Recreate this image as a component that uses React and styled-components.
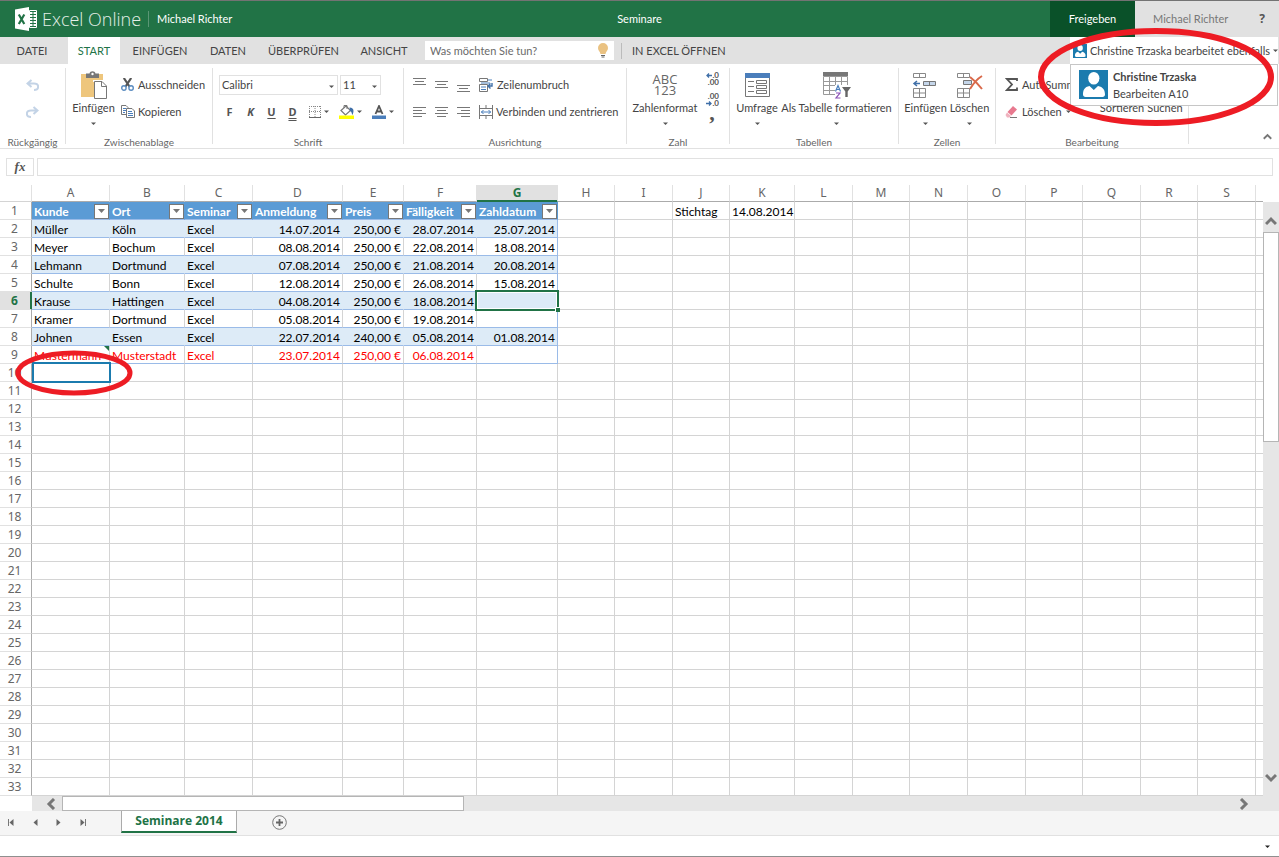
import React from "react";
import styled, { createGlobalStyle, css } from "styled-components";

const Global = createGlobalStyle`
  *, *::before, *::after { box-sizing: border-box; }
  body { margin: 0; background: #fff; color: #444; font: 11px/16px Lato, "Open Sans", sans-serif; }
  button, input, select { font: inherit; color: inherit; margin: 0; padding: 0; border: 0; background: none; border-radius: 0; }
  button { cursor: pointer; white-space: nowrap; }
  svg { display: block; flex: none; }
`;

const Page = styled.div`
  display: flex;
  flex-direction: column;
  min-height: 100vh;
  overflow-x: hidden;
  border-top: 1px solid #737373;
  border-bottom: 1px solid #8f8f8f;
`;

/* Title bar */
const TitleBar = styled.header`
  display: grid;
  grid-template-columns: 1fr auto 1fr;
  align-items: stretch;
  height: 36px;
  background: #217346;
  color: #fff;
`;
const Brand = styled.div`
  display: flex;
  align-items: center;
  padding-left: 15px;
`;
const BrandName = styled.span`
  margin-left: 5px;
  width: 106px;
  font: 300 18px/24px "Open Sans", sans-serif;
  color: #e3efe8;
  white-space: nowrap;
`;
const BrandOwner = styled.span`
  padding-left: 8px;
  border-left: 1px solid #5a9675;
`;
const DocName = styled.h1`
  margin: 0;
  align-self: center;
  font: inherit;
`;
const Account = styled.div`
  display: flex;
  justify-content: flex-end;
`;
const ShareButton = styled.button`
  width: 85px;
  background: #0a5129;
`;
const AccountPanel = styled.div`
  display: flex;
  align-items: center;
  justify-content: space-between;
  width: 144px;
  padding: 0 14px 0 18px;
  background: #e1e1e1;
  color: #777;
`;
const HelpButton = styled.button`
  font: 700 12px/16px "Noto Sans", sans-serif;
  color: #555;
`;

/* Tabs */
const TabBar = styled.nav`
  display: flex;
  height: 27px;
  background: #e1e1e1;
  gap: 4px;
`;
const Tab = styled.button`
  width: ${(p) => p.$w}px;
  ${(p) => p.$active && css`background: #fff; color: #217346;`}
`;
const TellMe = styled.label`
  display: flex;
  align-items: center;
  width: 189px;
  height: 19px;
  margin: 4px 3px 4px 4px;
  padding: 0 5px;
  background: #fff;
`;
const TellMeInput = styled.input`
  flex: 1;
  min-width: 0;
  outline: 0;
  &::placeholder { color: #6a6a6a; opacity: 1; }
`;
const OpenInExcel = styled.a`
  align-self: center;
  padding-left: 10px;
  border-left: 1px solid #bbb;
  color: inherit;
  text-decoration: none;
  white-space: nowrap;
`;
const Presence = styled.div`
  position: relative;
  width: 208px;
  margin: 0 1px 0 auto;
  background: #fff;
`;
const PresenceButton = styled.button`
  display: flex;
  align-items: center;
  gap: 3px;
  width: 100%;
  height: 27px;
  padding: 0 3px;
`;
const PresenceText = styled.span`
  flex: 1;
  text-align: left;
`;
const PresenceMenu = styled.div`
  position: absolute;
  z-index: 2;
  top: 27px;
  left: 0;
  display: flex;
  gap: 5px;
  width: 100%;
  height: 42px;
  padding: 5px 8px;
  background: #fff;
  border: 1px solid #c6c6c6;
`;
const PresencePerson = styled.div`
  line-height: 17px;
  margin-top: -2px;
`;
const PersonName = styled.strong`
  display: block;
`;
const Highlight = styled.svg`
  position: absolute;
  z-index: 3;
  pointer-events: none;
  ${(p) => p.$place === "presence"
    ? css`top: -9px; right: -1px;`
    : css`top: -14px; left: -17px;`}
`;

/* Ribbon */
const Ribbon = styled.section`
  display: flex;
  height: 85px;
  padding-top: 4px;
  border-bottom: 1px solid #e1e1e1;
`;
const Group = styled.div`
  display: flex;
  flex-direction: column;
  width: ${(p) => p.$w}px;
  height: 76px;
  border-right: 1px solid #e1e1e1;
`;
const GroupBody = styled.div`
  display: flex;
  flex: none;
  height: 67px;
  padding-left: ${(p) => p.$pad || 0}px;
  gap: ${(p) => p.$gap || 0}px;
`;
const GroupLabel = styled.div`
  text-align: center;
  font-size: 10px;
  line-height: 14px;
  color: #666;
`;
const Rows = styled.div`
  display: flex;
  flex-direction: column;
  padding-top: 3px;
  width: ${(p) => p.$w || "auto"};
  ${(p) => p.$center && css`align-items: center;`}
`;
const Row = styled.div`
  display: flex;
  align-items: center;
  height: 27px;
  gap: ${(p) => p.$gap || 0}px;
  padding-left: ${(p) => p.$pad || 0}px;
`;
const Tool = styled.button`
  display: flex;
  align-items: center;
  gap: ${(p) => p.$gap ?? 4}px;
`;
const Letter = styled.button`
  width: 21px;
  text-align: center;
  font-family: "Noto Sans", sans-serif;
  font-weight: 700;
  font-style: ${(p) => (p.$italic ? "italic" : "normal")};
  text-decoration: ${(p) => p.$line || "none"};
  text-underline-offset: 2px;
  color: #555;
`;
const BigTool = styled.button`
  display: flex;
  flex-direction: column;
  align-items: center;
  align-self: flex-start;
  width: ${(p) => p.$w}px;
`;
const BigIcon = styled.span`
  display: flex;
  align-items: center;
  justify-content: center;
  height: 32px;
  padding-top: 2px;
`;
const BigCaret = styled.span`
  display: flex;
  align-items: center;
  height: 14px;
`;
const SelectBox = styled.label`
  position: relative;
  width: ${(p) => p.$w}px;
  height: 20px;
  border: 1px solid #e1e1e1;
`;
const Select = styled.select`
  display: block;
  width: 100%;
  height: 18px;
  padding-left: 2px;
  appearance: none;
  outline: 0;
`;
const SelectCaret = styled.span`
  position: absolute;
  right: 3px;
  top: 9px;
  pointer-events: none;
`;
const MiniColumn = styled.div`
  display: flex;
  flex-direction: column;
  gap: 7px;
  padding-top: 4px;
`;
const CollapseButton = styled.button`
  margin: auto 7px 7px auto;
`;

/* Formula bar */
const FormulaBar = styled.div`
  display: flex;
  gap: 3px;
  height: 36px;
  padding: 9px 6px;
`;
const FxButton = styled.button`
  display: flex;
  align-items: center;
  justify-content: center;
  width: 28px;
  border: 1px solid #e1e1e1;
  font: italic 700 13px/14px "Liberation Serif", serif;
  color: #555;
`;
const FormulaInput = styled.input`
  flex: 1;
  border: 1px solid #e1e1e1;
  outline: 0;
`;

/* Sheet */
const SheetArea = styled.main`
  display: flex;
`;
const SheetWrap = styled.div`
  flex: 1;
  min-width: 0;
`;
const Sheet = styled.table`
  width: 100%;
  table-layout: fixed;
  border-collapse: separate;
  border-spacing: 0;
`;
const Col = styled.col`
  width: ${(p) => (p.$w ? p.$w + "px" : "auto")};
`;
const headBase = css`
  padding: 0;
  font: 12px/16px "Noto Sans", "Open Sans", sans-serif;
  color: #666;
  text-align: center;
  border-right: 1px solid #e1e1e1;
  border-bottom: 1px solid #ababab;
`;
const ColHead = styled.th`
  ${headBase}
  height: 17px;
  ${(p) => p.$active && css`
    background: #e1e1e1;
    color: #217346;
    font-weight: 700;
    box-shadow: inset 0 -1px #217346;
    border-bottom-color: #217346;
  `}
  &:last-child { border-right: 0; }
`;
const CornerHead = styled.td`
  ${headBase}
  height: 17px;
  border-bottom-color: #d4d4d4;
`;
const RowHead = styled.th`
  ${headBase}
  height: 18px;
  padding-right: 2px;
  border-right-color: #ababab;
  border-bottom-color: #e1e1e1;
  ${(p) => p.$active && css`
    background: #e1e1e1;
    color: #217346;
    font-weight: 700;
    border-right-color: #217346;
    box-shadow: inset -1px 0 #217346;
  `}
`;
const Cell = styled.td`
  position: relative;
  height: 18px;
  padding: 2px 2px 0 2px;
  font: 12px/15px Lato, "Open Sans", sans-serif;
  color: ${(p) => (p.$red ? "#f00" : "#000")};
  text-align: ${(p) => p.$align || "left"};
  white-space: nowrap;
  border-right: 1px solid ${(p) => (p.$edge ? "#9abbe8" : p.$band ? "#ddebf7" : "#d4d4d4")};
  border-bottom: 1px solid ${(p) => (p.$table ? "#9abbe8" : "#d4d4d4")};
  background: ${(p) => (p.$band ? "#ddebf7" : "#fff")};
  &:last-child { border-right: 0; }
`;
const HeadCell = styled(Cell)`
  padding: 0 0 0 2px;
  background: #5b9bd5;
  border-right-color: #5b9bd5;
  font-weight: 700;
  color: #fff;
`;
const HeadCellInner = styled.div`
  display: flex;
  align-items: flex-end;
  justify-content: space-between;
  height: 16px;
`;
const FilterButton = styled.button`
  display: flex;
  flex: none;
  align-items: center;
  justify-content: center;
  width: 15px;
  height: 15px;
  background: #fff;
  border: 1px solid #777;
`;
const ActiveCell = styled.div`
  position: absolute;
  z-index: 1;
  inset: -2px;
  border: 2px solid ${(p) => p.$color};
  ${(p) => p.$handle && css`
    box-shadow: inset 0 0 0 1px #fff;
    &::after {
      content: "";
      position: absolute;
      right: -3px;
      bottom: -3px;
      width: 5px;
      height: 5px;
      background: ${p.$color};
      border: solid #fff;
      border-width: 1px 0 0 1px;
    }
  `}
  ${(p) => p.$other && css`left: 0;`}
`;
const ErrorMark = styled.span`
  position: absolute;
  top: 0;
  right: 0;
  border-top: 5px solid #217346;
  border-left: 5px solid transparent;
`;

/* Scroll bars */
const VScroll = styled.div`
  display: flex;
  flex-direction: column;
  align-items: center;
  width: 16px;
  margin-top: 17px;
  padding: 13px 0 27px;
  background: #e6e6e6;
`;
const VThumb = styled.div`
  width: 16px;
  height: 210px;
  margin: 5px 0 auto;
  background: #fff;
  border: 1px solid #b5b5b5;
`;
const HScroll = styled.div`
  display: flex;
  align-items: center;
  height: 15px;
  margin-left: 32px;
  padding: 0 13px;
  background: #e6e6e6;
`;
const HThumb = styled.div`
  width: 402px;
  height: 15px;
  margin: 0 auto 0 5px;
  background: #fff;
  border: 1px solid #b5b5b5;
`;

/* Sheet tabs */
const SheetTabs = styled.footer`
  display: flex;
  align-items: flex-start;
  height: 25px;
  background: #f5f5f5;
  border-bottom: 1px solid #e1e1e1;
`;
const SheetNav = styled.div`
  display: flex;
  align-items: center;
  gap: 16px;
  width: 121px;
  height: 23px;
  padding-left: 7px;
`;
const SheetTab = styled.button`
  width: 116px;
  height: 22px;
  background: #fff;
  border: solid #ababab;
  border-width: 0 1px 2px;
  border-bottom-color: #217346;
  color: #217346;
  font: 700 12px/20px "Open Sans", sans-serif;
`;
const AddSheet = styled.button`
  margin: 4px 0 0 35px;
`;
const StatusBar = styled.div`
  display: flex;
  align-items: center;
  justify-content: flex-end;
  flex: 1;
  min-height: 20px;
  padding-right: 9px;
`;

/* Drawings */
const Caret = ({ color = "#555" }) => (
  <svg width="5" height="3" viewBox="0 0 5 3"><path d="M0 0.5h5L2.5 3z" fill={color} /></svg>
);
const Svg = ({ w, h, children, ...rest }) => (
  <svg width={w} height={h} viewBox={`0 0 ${w} ${h}`} fill="none" aria-hidden="true" {...rest}>{children}</svg>
);
const ExcelLogo = () => (
  <Svg w={22} h={24}>
    <path d="M14.500 3.500h7v17h-7z" stroke="#fff" />
    <path d="M15 6h2.500M15 9h2.500M15 12h2.500M15 15h2.500M15 18h2.500M18.500 6H21M18.500 9H21M18.500 12H21M18.500 15H21M18.500 18H21" stroke="#fff" strokeWidth="2" />
    <path d="M0 2.500 14 0v24L0 21.500z" fill="#fff" />
    <path d="m3.800 7.500 5.500 9.500M9.300 7.500 3.800 17" stroke="#217346" strokeWidth="2.200" />
  </Svg>
);
const Bulb = () => (
  <Svg w={12} h={15}>
    <path d="M6 0a5 5 0 0 1 5 5c0 2.500-2 3.500-2.500 6h-5C3 8.500 1 7.500 1 5a5 5 0 0 1 5-5z" fill="#eac282" />
    <path d="M4 12.500h4M4.500 14h3" stroke="#666" />
  </Svg>
);
const Person = ({ size }) => (
  <svg width={size} height={size} viewBox="0 0 29 29" aria-hidden="true">
    <path d="M0 0h29v29H0z" fill="#1b7bae" />
    <ellipse cx="14.800" cy="8.300" rx="5.600" ry="6.300" fill="#fff" />
    <path d="M4 24.500c0-4.500 1.500-7.500 6.500-8.500l4.300 4 4.200-4c5 1 7 4 7 8.500 0 1.500-1 2.500-2.500 2.500h-17C5 27 4 26 4 24.500z" fill="#fff" />
  </svg>
);
const Undo = ({ flip }) => (
  <Svg w={13} h={12} transform={flip ? "scale(-1 1)" : undefined}>
    <path d="M1.500 4.500H8c5.500 0 5.500 6.500 0 6.500M5.500 1l-4 3.500 4 3.500" stroke="#c3d3e6" strokeWidth="2" />
  </Svg>
);
const Paste = () => (
  <Svg w={26} h={28}>
    <path d="M0 3h22v23H0z" fill="#eec67d" />
    <path d="M5 2.500h3.500C9-.5 14-.5 14.500 2.500H18v4.500H5z" fill="#777" />
    <circle cx="11.500" cy="3" r="1.200" fill="#fff" />
    <path d="M12 9h10.500v2H12z" fill="#fff" />
    <path d="M13.500 10.500h7.500l4.500 4.500v12.500h-12z" fill="#fff" stroke="#777" />
    <path d="M20.500 10.500V15.500h5" stroke="#777" />
  </Svg>
);
const Cut = () => (
  <Svg w={13} h={13}>
    <path d="M2.800 0 8.800 9M10.200 0 4.200 9" stroke="#555" strokeWidth="2.200" />
    <circle cx="2.900" cy="10" r="2.200" fill="#fff" stroke="#5b8cc0" strokeWidth="1.400" />
    <circle cx="10.100" cy="10" r="2.200" fill="#fff" stroke="#5b8cc0" strokeWidth="1.400" />
  </Svg>
);
const Copy = () => (
  <Svg w={14} h={13}>
    <path d="M.5.5H5l2 2v7H.5z" fill="#fff" stroke="#777" />
    <path d="M2 3.500h3M2 5.500h3M2 7.500h2" stroke="#4a7ebb" />
    <path d="M5.500 3.500H11l2.500 2.500v6.500h-8z" fill="#fff" stroke="#777" />
    <path d="M7 6.500h4M7 8.500h5M7 10.500h5" stroke="#4a7ebb" />
  </Svg>
);
const Borders = () => (
  <Svg w={12} h={12}>
    <path d="M.5 0v12M11.500 0v12M0 .5h12M0 5.500h12M6 0v12" stroke="#888" strokeDasharray="1 1" />
    <path d="M0 11.500h12" stroke="#666" />
  </Svg>
);
const Fill = () => (
  <Svg w={15} h={14}>
    <path d="m2 5.500 5-4.500 4.500 4.500-5 4.500z" fill="#fff" stroke="#777" strokeWidth="1.200" />
    <path d="M5 3V.5h3v3.500" stroke="#777" />
    <path d="M10.500 2.500c4 0 5 3 3 7.500-1-1.500-.5-3-2.500-4z" fill="#3f6fa8" />
    <path d="M0 10.500h15v3.500H0z" fill="#ff0" />
  </Svg>
);
const FontColor = () => (
  <Svg w={14} h={14}>
    <path d="m3.500 9 3.500-8 3.500 8M4.500 6.500h5" stroke="#555" strokeWidth="1.800" />
    <path d="M0 10.500h14v3.500H0z" fill="#4a7ebb" />
  </Svg>
);
const Lines = ({ lines }) => (
  <Svg w={13} h={14}>
    {lines.map(([x1, x2, y]) => <path key={y} d={`M${x1} ${y + 0.5}H${x2}`} stroke="#777" />)}
  </Svg>
);
const Wrap = () => (
  <Svg w={14} h={14}>
    <path d="M.5.500h8v3h-8zM.5 6.500h8v7h-8z" stroke="#777" />
    <path d="M9 2h4M2 5h9M2 9h5M2 11.500h5" stroke="#4a7ebb" />
    <path d="M13 5v3H9.500M11.500 5.500 9 8l2.500 2.500" stroke="#3f6fa8" strokeWidth="1.400" />
  </Svg>
);
const Merge = () => (
  <Svg w={14} h={14}>
    <path d="M.5 0v14M13.500 0v14M0 3.500h14M0 10.500h14M7 0v3.500M7 10.500V14" stroke="#777" />
    <path d="M2 7h10M4.500 5 2.500 7l2 2M9.500 5l2 2-2 2" stroke="#4a7ebb" />
  </Svg>
);
const NumberText = styled.span`
  font: 500 13px/11px "Open Sans", sans-serif;
  color: #666;
  text-align: center;
`;
const DecimalText = styled.span`
  display: flex;
  align-items: center;
  justify-content: flex-end;
  width: 14px;
  height: 7px;
  font-size: 8px;
  line-height: 7px;
  font-weight: 700;
  color: #555;
`;
const Comma = styled.button`
  height: 12px;
  margin-top: -7px;
  font: 700 22px/12px "Liberation Serif", serif;
  color: #555;
`;
const DecArrow = ({ right }) => (
  <Svg w={6} h={5} transform={right ? "scale(-1 1)" : undefined}>
    <path d="M1 2.500h5M3 .5l-2 2 2 2" stroke="#3f6fa8" strokeWidth="1.300" />
  </Svg>
);
const Survey = () => (
  <Svg w={25} h={24}>
    <path d="M.5.500h24v23H.5z" fill="#fff" stroke="#777" />
    <path d="M0 0h25v5H0z" fill="#4a7ebb" />
    <path d="M3 8.500h6M3 13.500h6M3 18.500h6M11.500 7.500h10v3h-10zM11.500 12.500h10v3h-10zM11.500 17.500h10v3h-10z" stroke="#777" />
  </Svg>
);
const FormatTable = () => (
  <Svg w={28} h={27}>
    <path d="M.5 4.500h24v18H.5zM0 9.500h25M0 13.500h25M0 18.500h25M6.500 4v19M12.500 4v19M18.500 4v19" stroke="#999" />
    <path d="M0 0h25v4H0z" fill="#777" />
    <path d="M12 13h16v14H12z" fill="#fff" />
    <path d="m12.500 19.500 2.500-6 2.500 6M13.500 17.500h3" stroke="#4a7ebb" strokeWidth="1.200" />
    <path d="M13 21h4l-4 5h4.500" stroke="#8a4fb5" strokeWidth="1.200" />
    <path d="M19 15h9l-3.300 4.500V25h-2.400v-5.500z" fill="#666" />
  </Svg>
);
const CellsIcon = ({ remove }) => (
  <Svg w={27} h={26}>
    <path d="M1.500 1.500h12v4h-12zM7.500 1.500v4M1.500 16.500h12v9h-12zM7.500 16.500v9M1.500 21h12" stroke="#888" />
    {remove ? (
      <>
        <path d="M7.500 8.500h8v4h-8z" fill="#c5d6ea" stroke="#777" />
        <path d="M14 5c4 3 8 7 12 12M26 4c-5 3-9 8-12 13" stroke="#d9694a" strokeWidth="2" />
      </>
    ) : (
      <>
        <path d="M11.500 9.500h12v4h-12zM17.500 9.500v4" fill="#c5d6ea" stroke="#777" />
        <path d="M2 11.500h6M5 9l-3 2.500L5 14" stroke="#3f6fa8" strokeWidth="1.500" />
      </>
    )}
  </Svg>
);
const Sigma = () => (
  <Svg w={13} h={13}>
    <path d="M12 3V1H2l5 5.500-5 5.500h10V9.500" stroke="#555" strokeWidth="1.800" />
  </Svg>
);
const Eraser = () => (
  <Svg w={13} h={12}>
    <path d="m8 0 4 3.500-5.500 6L2.500 6z" fill="#e8798f" />
    <path d="m2 6.500 4 3.500-1.500 1.500H2L.5 9z" fill="#f0b3bf" />
    <path d="M5 11.500h7" stroke="#777" />
  </Svg>
);
const Chevron = ({ dir, size = 12, w = 3 }) => {
  const r = { up: 0, right: 90, down: 180, left: 270 }[dir];
  return (
    <svg width={size} height={size} viewBox="0 0 12 12" fill="none" aria-hidden="true">
      <path d="m1 9 5-5 5 5" stroke="#777" strokeWidth={w} transform={`rotate(${r} 6 6)`} />
    </svg>
  );
};
const NavArrow = ({ dir, bar }) => (
  <Svg w={8} h={7}>
    <path d={dir === "left" ? "M6.500 0v7L2.500 3.500z" : "M1.500 0v7l4-3.500z"} fill="#666" />
    {bar && <path d={dir === "left" ? "M1.500 0v7" : "M6.500 0v7"} stroke="#777" />}
  </Svg>
);
const Plus = () => (
  <Svg w={15} h={15}>
    <circle cx="7.500" cy="7.500" r="6.800" stroke="#777" />
    <path d="M7.500 4v7M4 7.500h7" stroke="#666" strokeWidth="1.800" />
  </Svg>
);

/* Data */
const columns = [
  ["A", 78], ["B", 75], ["C", 68], ["D", 90], ["E", 61], ["F", 73], ["G", 81], ["H", 57], ["I", 58], ["J", 57],
  ["K", 65], ["L", 58], ["M", 57], ["N", 58], ["O", 58], ["P", 57], ["Q", 58], ["R", 57], ["S", 58], ["", 0],
];
const tableHead = ["Kunde", "Ort", "Seminar", "Anmeldung", "Preis", "Fälligkeit", "Zahldatum"];
const records = [
  ["Müller", "Köln", "Excel", "14.07.2014", "250,00 €", "28.07.2014", "25.07.2014"],
  ["Meyer", "Bochum", "Excel", "08.08.2014", "250,00 €", "22.08.2014", "18.08.2014"],
  ["Lehmann", "Dortmund", "Excel", "07.08.2014", "250,00 €", "21.08.2014", "20.08.2014"],
  ["Schulte", "Bonn", "Excel", "12.08.2014", "250,00 €", "26.08.2014", "15.08.2014"],
  ["Krause", "Hattingen", "Excel", "04.08.2014", "250,00 €", "18.08.2014", ""],
  ["Kramer", "Dortmund", "Excel", "05.08.2014", "250,00 €", "19.08.2014", ""],
  ["Johnen", "Essen", "Excel", "22.07.2014", "240,00 €", "05.08.2014", "01.08.2014"],
  ["Mustermann", "Musterstadt", "Excel", "23.07.2014", "250,00 €", "06.08.2014", ""],
];

function SheetCell({ row, col }) {
  if (row === 1) {
    if (col < 7) {
      return (
        <HeadCell $table>
          <HeadCellInner>
            {tableHead[col]}
            <FilterButton aria-label={`${tableHead[col]} filtern`}>
              <svg width="7" height="4" viewBox="0 0 7 4"><path d="M0 0h7L3.500 4z" fill="#777" /></svg>
            </FilterButton>
          </HeadCellInner>
        </HeadCell>
      );
    }
    if (col === 9) return <Cell>Stichtag</Cell>;
    if (col === 10) return <Cell $align="right">14.08.2014</Cell>;
    return <Cell />;
  }
  if (row <= 9 && col < 7) {
    return (
      <Cell $table $band={row % 2 === 0} $edge={col === 6} $red={row === 9} $align={col > 2 ? "right" : "left"}>
        {records[row - 2][col]}
        {row === 6 && col === 6 && <ActiveCell $color="#217346" $handle />}
        {row === 9 && col === 0 && <ErrorMark />}
      </Cell>
    );
  }
  if (row === 10 && col === 0) {
    return (
      <Cell>
        <ActiveCell $color="#1b7bae" $other />
        <Highlight width="118" height="46" viewBox="0 0 118 46" $place="cell" aria-hidden="true">
          <ellipse cx="59" cy="23" rx="56" ry="20" fill="none" stroke="#ed1c24" strokeWidth="5" />
        </Highlight>
      </Cell>
    );
  }
  return <Cell />;
}

const Big = ({ icon, label, w, caret = true }) => (
  <BigTool $w={w}>
    <BigIcon>{icon}</BigIcon>
    {label}
    {caret && <BigCaret><Caret /></BigCaret>}
  </BigTool>
);

export default function App() {
  return (
    <>
      <Global />
      <Page>
        <TitleBar>
          <Brand>
            <ExcelLogo />
            <BrandName>Excel Online</BrandName>
            <BrandOwner>Michael Richter</BrandOwner>
          </Brand>
          <DocName>Seminare</DocName>
          <Account>
            <ShareButton>Freigeben</ShareButton>
            <AccountPanel>
              Michael Richter
              <HelpButton>?</HelpButton>
            </AccountPanel>
          </Account>
        </TitleBar>

        <TabBar>
          <Tab $w={64}>DATEI</Tab>
          <Tab $w={52} $active>START</Tab>
          <Tab $w={72}>EINFÜGEN</Tab>
          <Tab $w={56}>DATEN</Tab>
          <Tab $w={87}>ÜBERPRÜFEN</Tab>
          <Tab $w={66}>ANSICHT</Tab>
          <TellMe>
            <TellMeInput placeholder="Was möchten Sie tun?" aria-label="Was möchten Sie tun?" />
            <Bulb />
          </TellMe>
          <OpenInExcel href="#">IN EXCEL ÖFFNEN</OpenInExcel>
          <Presence>
            <PresenceButton>
              <Person size={14} />
              <PresenceText>Christine Trzaska bearbeitet ebenfalls</PresenceText>
              <Caret />
            </PresenceButton>
            <PresenceMenu>
              <Person size={29} />
              <PresencePerson>
                <PersonName>Christine Trzaska</PersonName>
                Bearbeiten A10
              </PresencePerson>
            </PresenceMenu>
            <Highlight width="246" height="98" viewBox="0 0 246 98" $place="presence" aria-hidden="true">
              <ellipse cx="123" cy="49" rx="115" ry="46" fill="none" stroke="#ed1c24" strokeWidth="6" />
            </Highlight>
          </Presence>
        </TabBar>

        <Ribbon>
          <Group $w={66}>
            <GroupBody>
              <Rows $center $w="100%">
                <Row><Tool aria-label="Rückgängig"><Undo /></Tool></Row>
                <Row><Tool aria-label="Wiederholen"><Undo flip /></Tool></Row>
              </Rows>
            </GroupBody>
            <GroupLabel>Rückgängig</GroupLabel>
          </Group>

          <Group $w={147}>
            <GroupBody $pad={5} $gap={5}>
              <Big w={45} icon={<Paste />} label="Einfügen" />
              <Rows>
                <Row><Tool><Cut />Ausschneiden</Tool></Row>
                <Row><Tool $gap={3}><Copy />Kopieren</Tool></Row>
              </Rows>
            </GroupBody>
            <GroupLabel>Zwischenablage</GroupLabel>
          </Group>

          <Group $w={191}>
            <GroupBody $pad={6}>
              <Rows>
                <Row $gap={2}>
                  <SelectBox $w={119}>
                    <Select aria-label="Schriftart"><option>Calibri</option></Select>
                    <SelectCaret><Caret /></SelectCaret>
                  </SelectBox>
                  <SelectBox $w={41}>
                    <Select aria-label="Schriftgrad"><option>11</option></Select>
                    <SelectCaret><Caret /></SelectCaret>
                  </SelectBox>
                </Row>
                <Row>
                  <Letter>F</Letter>
                  <Letter $italic>K</Letter>
                  <Letter $line="underline">U</Letter>
                  <Letter $line="underline double">D</Letter>
                  <Row $gap={10} $pad={6}>
                    <Tool $gap={3} aria-label="Rahmen"><Borders /><Caret /></Tool>
                    <Tool $gap={3} aria-label="Füllfarbe"><Fill /><Caret /></Tool>
                    <Tool $gap={3} aria-label="Schriftfarbe"><FontColor /><Caret /></Tool>
                  </Row>
                </Row>
              </Rows>
            </GroupBody>
            <GroupLabel>Schrift</GroupLabel>
          </Group>

          <Group $w={223}>
            <GroupBody $pad={9}>
              <Rows>
                <Row $gap={9}>
                  <Tool aria-label="Oben ausrichten"><Lines lines={[[0, 13, 0], [2, 11, 3], [0, 13, 6]]} /></Tool>
                  <Tool aria-label="Zentriert ausrichten"><Lines lines={[[0, 13, 3], [2, 11, 6], [0, 13, 9]]} /></Tool>
                  <Tool aria-label="Unten ausrichten"><Lines lines={[[0, 13, 7], [2, 11, 10], [0, 13, 13]]} /></Tool>
                  <Tool><Wrap />Zeilenumbruch</Tool>
                </Row>
                <Row $gap={9}>
                  <Tool aria-label="Linksbündig"><Lines lines={[[0, 13, 2], [0, 9, 5], [0, 13, 8], [0, 9, 11]]} /></Tool>
                  <Tool aria-label="Zentriert"><Lines lines={[[0, 13, 2], [2, 11, 5], [0, 13, 8], [2, 11, 11]]} /></Tool>
                  <Tool aria-label="Rechtsbündig"><Lines lines={[[0, 13, 2], [4, 13, 5], [0, 13, 8], [4, 13, 11]]} /></Tool>
                  <Tool $gap={3}><Merge />Verbinden und zentrieren</Tool>
                </Row>
              </Rows>
            </GroupBody>
            <GroupLabel>Ausrichtung</GroupLabel>
          </Group>

          <Group $w={103}>
            <GroupBody $pad={3} $gap={5}>
              <Big w={70} icon={<NumberText>ABC<br />123</NumberText>} label="Zahlenformat" />
              <MiniColumn>
                <Tool aria-label="Dezimalstelle hinzufügen">
                  <span>
                    <DecimalText><DecArrow />.0</DecimalText>
                    <DecimalText>.00</DecimalText>
                  </span>
                </Tool>
                <Tool aria-label="Dezimalstelle entfernen">
                  <span>
                    <DecimalText>.00</DecimalText>
                    <DecimalText><DecArrow right />.0</DecimalText>
                  </span>
                </Tool>
                <Comma>,</Comma>
              </MiniColumn>
            </GroupBody>
            <GroupLabel>Zahl</GroupLabel>
          </Group>

          <Group $w={169}>
            <GroupBody $pad={5}>
              <Big w={44} icon={<Survey />} label="Umfrage" />
              <Big w={115} icon={<FormatTable />} label="Als Tabelle formatieren" />
            </GroupBody>
            <GroupLabel>Tabellen</GroupLabel>
          </Group>

          <Group $w={97}>
            <GroupBody $pad={4}>
              <Big w={45} icon={<CellsIcon />} label="Einfügen" />
              <Big w={43} icon={<CellsIcon remove />} label="Löschen" />
            </GroupBody>
            <GroupLabel>Zellen</GroupLabel>
          </Group>

          <Group $w={193}>
            <GroupBody $pad={9}>
              <Rows $w="94px">
                <Row><Tool><Sigma />AutoSumme</Tool></Row>
                <Row><Tool><Eraser />Löschen<Caret /></Tool></Row>
              </Rows>
              <Big w={46} caret={false} label="Sortieren" />
              <Big w={40} caret={false} label="Suchen" />
            </GroupBody>
            <GroupLabel>Bearbeitung</GroupLabel>
          </Group>
          <CollapseButton aria-label="Menüband reduzieren"><Chevron dir="up" size={9} w={2.5} /></CollapseButton>
        </Ribbon>

        <FormulaBar>
          <FxButton>fx</FxButton>
          <FormulaInput aria-label="Bearbeitungsleiste" />
        </FormulaBar>

        <SheetArea>
          <SheetWrap>
            <Sheet>
              <colgroup>
                <Col $w={32} />
                {columns.map(([, w], i) => <Col key={i} $w={w} />)}
              </colgroup>
              <thead>
                <tr>
                  <CornerHead />
                  {columns.map(([name], i) => <ColHead key={i} scope="col" $active={name === "G"}>{name}</ColHead>)}
                </tr>
              </thead>
              <tbody>
                {Array.from({ length: 33 }, (_, i) => i + 1).map((row) => (
                  <tr key={row}>
                    <RowHead scope="row" $active={row === 6}>{row}</RowHead>
                    {columns.map((_, col) => <SheetCell key={col} row={row} col={col} />)}
                  </tr>
                ))}
              </tbody>
            </Sheet>
            <HScroll>
              <button aria-label="Nach links"><Chevron dir="left" /></button>
              <HThumb />
              <button aria-label="Nach rechts"><Chevron dir="right" /></button>
            </HScroll>
          </SheetWrap>
          <VScroll>
            <button aria-label="Nach oben"><Chevron dir="up" /></button>
            <VThumb />
            <button aria-label="Nach unten"><Chevron dir="down" /></button>
          </VScroll>
        </SheetArea>

        <SheetTabs>
          <SheetNav>
            <button aria-label="Erstes Blatt"><NavArrow dir="left" bar /></button>
            <button aria-label="Vorheriges Blatt"><NavArrow dir="left" /></button>
            <button aria-label="Nächstes Blatt"><NavArrow dir="right" /></button>
            <button aria-label="Letztes Blatt"><NavArrow dir="right" bar /></button>
          </SheetNav>
          <SheetTab>Seminare 2014</SheetTab>
          <AddSheet aria-label="Neues Blatt"><Plus /></AddSheet>
        </SheetTabs>
        <StatusBar><Caret color="#222" /></StatusBar>
      </Page>
    </>
  );
}
